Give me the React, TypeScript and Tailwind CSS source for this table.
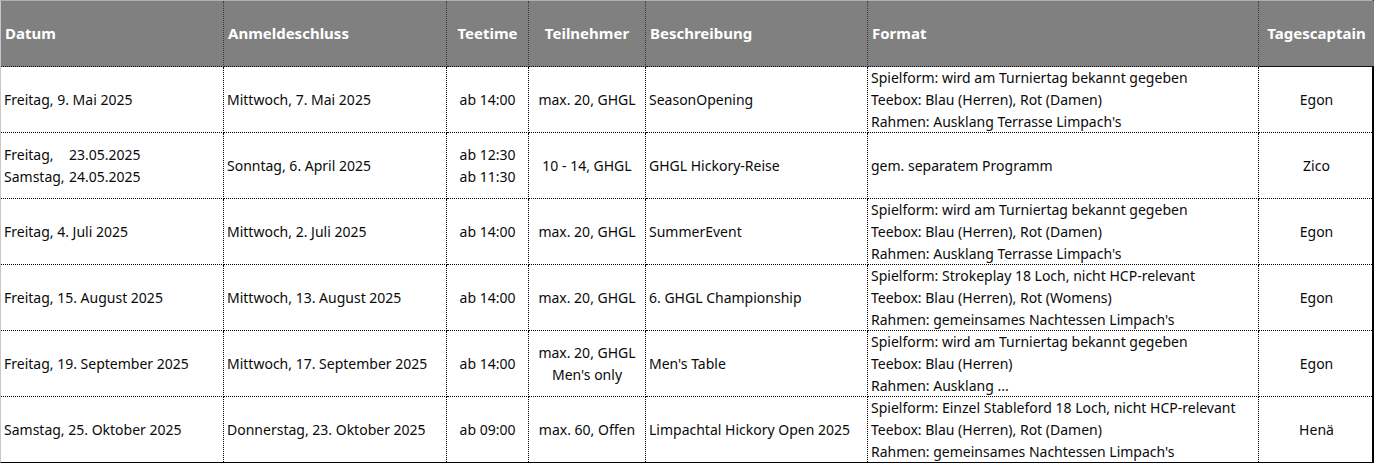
import React from "react";

type Align = "left" | "center";
const cols: { title: string; align: Align }[] = [
  { title: "Datum", align: "left" },
  { title: "Anmeldeschluss", align: "left" },
  { title: "Teetime", align: "center" },
  { title: "Teilnehmer", align: "center" },
  { title: "Beschreibung", align: "left" },
  { title: "Format", align: "left" },
  { title: "Tagescaptain", align: "center" },
];

type Cell = React.ReactNode;

const rows: Cell[][] = [
  [
    "Freitag, 9. Mai 2025",
    "Mittwoch, 7. Mai 2025",
    "ab 14:00",
    "max. 20, GHGL",
    "SeasonOpening",
    ["Spielform: wird am Turniertag bekannt gegeben", "Teebox: Blau (Herren), Rot (Damen)", "Rahmen: Ausklang Terrasse Limpach's"],
    "Egon",
  ],
  [
    <>
      <div>
        <span className="inline-block w-[65px]">Freitag,</span>23.05.2025
      </div>
      <div>
        <span className="inline-block w-[65px]">Samstag,</span>24.05.2025
      </div>
    </>,
    "Sonntag, 6. April 2025",
    ["ab 12:30", "ab 11:30"],
    "10 - 14, GHGL",
    "GHGL Hickory-Reise",
    "gem. separatem Programm",
    "Zico",
  ],
  [
    "Freitag, 4. Juli 2025",
    "Mittwoch, 2. Juli 2025",
    "ab 14:00",
    "max. 20, GHGL",
    "SummerEvent",
    ["Spielform: wird am Turniertag bekannt gegeben", "Teebox: Blau (Herren), Rot (Damen)", "Rahmen: Ausklang Terrasse Limpach's"],
    "Egon",
  ],
  [
    "Freitag, 15. August 2025",
    "Mittwoch, 13. August 2025",
    "ab 14:00",
    "max. 20, GHGL",
    "6. GHGL Championship",
    ["Spielform: Strokeplay 18 Loch, nicht HCP-relevant", "Teebox: Blau (Herren), Rot (Womens)", "Rahmen: gemeinsames Nachtessen Limpach's"],
    "Egon",
  ],
  [
    "Freitag, 19. September 2025",
    "Mittwoch, 17. September 2025",
    "ab 14:00",
    ["max. 20, GHGL", "Men's only"],
    "Men's Table",
    ["Spielform: wird am Turniertag bekannt gegeben", "Teebox: Blau (Herren)", "Rahmen: Ausklang ..."],
    "Egon",
  ],
  [
    "Samstag, 25. Oktober 2025",
    "Donnerstag, 23. Oktober 2025",
    "ab 09:00",
    "max. 60, Offen",
    "Limpachtal Hickory Open 2025",
    ["Spielform: Einzel Stableford 18 Loch, nicht HCP-relevant", "Teebox: Blau (Herren), Rot (Damen)", "Rahmen: gemeinsames Nachtessen Limpach's"],
    "Henä",
  ],
];

function renderContent(c: Cell) {
  if (Array.isArray(c)) return c.map((l, i) => <div key={i}>{l}</div>);
  return c;
}

export default function App() {
  return (
    <div className="w-[1374px] h-[463px] bg-white font-['Noto_Sans',sans-serif]">
      <div className="grid w-[1374px] grid-cols-[223px_223px_82px_117px_222px_391px_115px] border-t border-t-[#b0b0b0] border-l border-l-[#c8c8c8] border-r-2 border-r-black border-b border-b-black">
        {cols.map((c, i) => (
          <div
            key={c.title}
            className={`flex h-[66px] items-center bg-[#808080] text-[15px] font-bold text-white border-b border-b-[#111] ${
              i < cols.length - 1 ? "border-r border-r-[#3a3a3a] border-dotted" : ""
            } ${c.align === "center" ? "justify-center" : "pl-[4px]"}`}
          >
            {c.title}
          </div>
        ))}
        {rows.map((r, ri) =>
          r.map((cell, ci) => (
            <div
              key={`${ri}-${ci}`}
              className={`flex flex-col justify-center text-[14px] leading-[22px] text-[#0a0a0a] whitespace-nowrap overflow-hidden border-dotted ${
                ci < cols.length - 1 ? "border-r border-r-black" : ""
              } ${ri === rows.length - 1 ? "h-[65px]" : "h-[66px] border-b border-b-black"} ${
                cols[ci].align === "center" ? "items-center text-center" : "items-start pl-[3px]"
              }`}
            >
              {renderContent(cell)}
            </div>
          ))
        )}
      </div>
    </div>
  );
}
